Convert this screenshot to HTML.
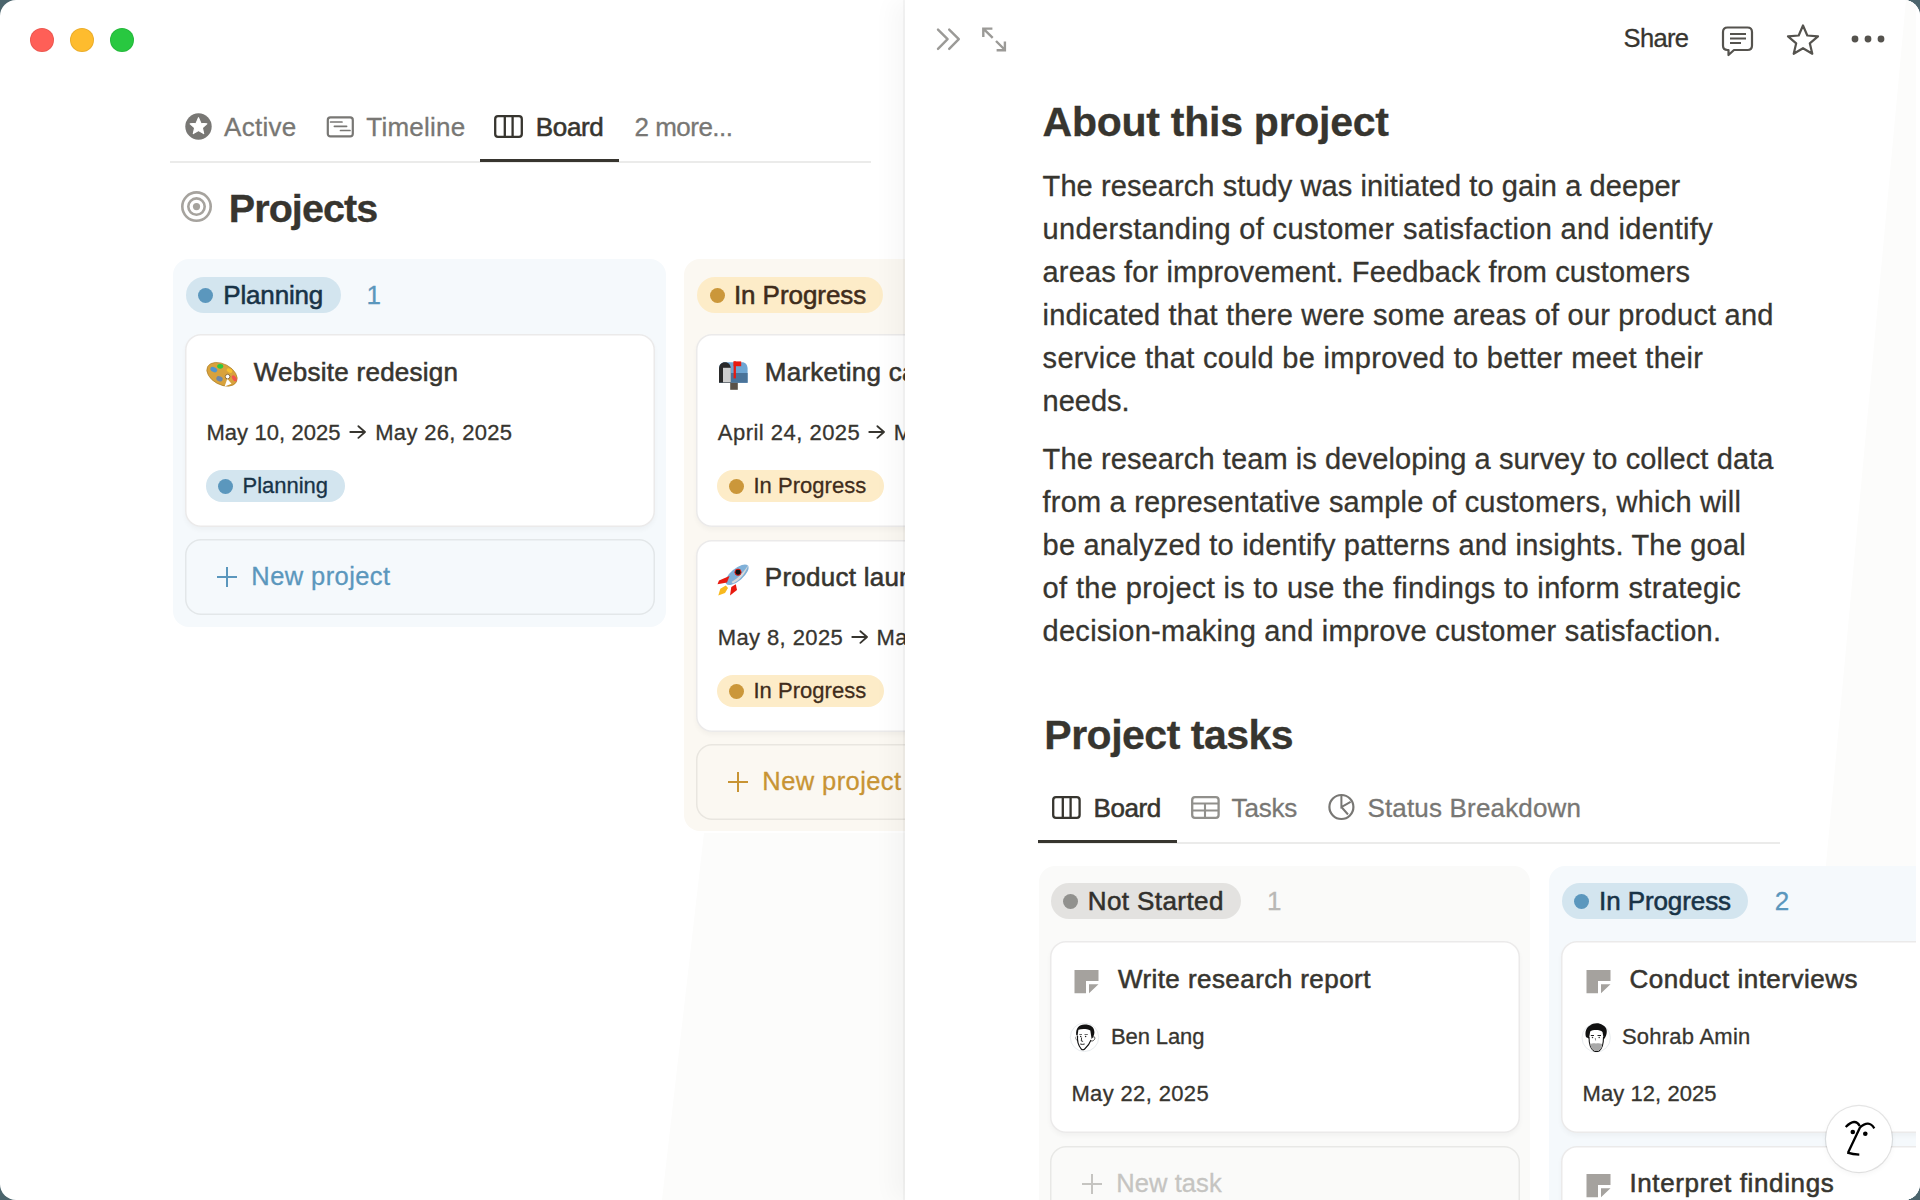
<!DOCTYPE html>
<html><head><meta charset="utf-8">
<style>
*{box-sizing:border-box;margin:0;padding:0}
html,body{width:1920px;height:1200px;overflow:hidden;background:#4b646c}
body{font-family:"Liberation Sans",sans-serif;color:#37352f;position:relative}
.win{position:absolute;left:0;top:0;width:1920px;height:1200px;border-radius:16px;background:#fff;overflow:hidden}
.t{position:absolute;white-space:nowrap;line-height:1em;-webkit-text-stroke-width:0.3px}
.m{-webkit-text-stroke-width:0.55px}
.r{position:absolute}
#left{position:absolute;left:0;top:0;width:905px;height:1200px;overflow:hidden}
#panel{position:absolute;left:905px;top:0;width:1015px;height:1200px;background:#fff;box-shadow:-2px 0 0 rgba(15,15,15,.04),-12px 0 22px rgba(15,15,15,.035)}
#clip{position:absolute;left:-905px;top:0;width:1916px;height:1200px;clip-path:inset(0 0 0 905px)}
</style></head><body>
<div class="win">
<div id="left">
<div class="r" style="left:0px;top:0px;width:905px;height:1200px;background:#fcfcfb;clip-path:polygon(704px 833px, 905px 833px, 905px 1200px, 662px 1200px)"></div>
<div class="r" style="left:30px;top:28px;width:24px;height:24px;border-radius:50%;background:#ff5f57;box-shadow:inset 0 0 0 1px rgba(0,0,0,.08)"></div>
<div class="r" style="left:70px;top:28px;width:24px;height:24px;border-radius:50%;background:#febc2e;box-shadow:inset 0 0 0 1px rgba(0,0,0,.08)"></div>
<div class="r" style="left:110px;top:28px;width:24px;height:24px;border-radius:50%;background:#28c840;box-shadow:inset 0 0 0 1px rgba(0,0,0,.08)"></div>
<svg class="r" style="left:185px;top:113px" width="27" height="27" viewBox="0 0 27 27"><circle cx="13.5" cy="13.5" r="13.2" fill="#787774"/><path d="M13.5 5.6 L15.6 10.6 L20.9 11 L16.9 14.5 L18.1 19.7 L13.5 16.9 L8.9 19.7 L10.1 14.5 L6.1 11 L11.4 10.6 Z" transform="translate(13.5 12.9) scale(1.13) translate(-13.5 -12.9)" fill="#fff" stroke="#fff" stroke-width="1" stroke-linejoin="round"/></svg>
<div class="t" style="left:224.1px;top:114.0px;font-size:26px;color:#787774;letter-spacing:0.283px;">Active</div>
<svg class="r" style="left:326px;top:115px" width="30" height="24" viewBox="0 0 30 24"><rect x="1.8" y="2.3" width="25" height="19.1" rx="2.6" fill="none" stroke="#787774" stroke-width="2.2"/><path d="M4.6 7 H16 M8.4 11.3 H20.6 M14.5 15.5 H24" stroke="#787774" stroke-width="1.7" stroke-linecap="round"/></svg>
<div class="t" style="left:366.3px;top:114.0px;font-size:26px;color:#787774;letter-spacing:0.242px;">Timeline</div>
<svg class="r" style="left:494px;top:115px" width="30" height="24" viewBox="0 0 30 24"><rect x="1.2" y="1.2" width="26.6" height="20.6" rx="2.8" fill="none" stroke="#37352f" stroke-width="2.3"/><path d="M10.8 1.5 V21.5 M18.6 1.5 V21.5" stroke="#37352f" stroke-width="2.3"/></svg>
<div class="t m" style="left:535.8px;top:114.2px;font-size:26px;color:#37352f;letter-spacing:-0.339px;">Board</div>
<div class="t" style="left:634.5px;top:114.0px;font-size:26px;color:#787774;letter-spacing:-0.509px;">2 more...</div>
<div class="r" style="left:170px;top:161px;width:701px;height:2px;background:#ebebea"></div>
<div class="r" style="left:480px;top:159px;width:139px;height:3px;background:#37352f"></div>
<svg class="r" style="left:180px;top:190px" width="34" height="34" viewBox="0 0 34 34"><circle cx="16.5" cy="16.6" r="14.2" fill="none" stroke="#a6a39e" stroke-width="2.6"/><circle cx="16.5" cy="16.6" r="8.2" fill="none" stroke="#a6a39e" stroke-width="2.6"/><circle cx="16.5" cy="16.6" r="3.6" fill="#a6a39e"/></svg>
<div class="t" style="left:228.7px;top:188.6px;font-size:39.5px;color:#37352f;font-weight:700;letter-spacing:-0.889px;">Projects</div>
<div class="r" style="left:173px;top:259px;width:493px;height:368px;border-radius:16px;background:#f5f9fc"></div>
<div class="r" style="left:684px;top:259px;width:400px;height:572px;border-radius:16px;background:#fbf8f2"></div>
<div class="r" style="left:186px;top:277px;width:155px;height:36px;border-radius:18.0px;background:#d3e5ef"></div>
<div class="r" style="left:198.0px;top:287.5px;width:15px;height:15px;border-radius:50%;background:#5b97bd"></div>
<div class="t m" style="left:223.3px;top:282.1px;font-size:26px;color:#183347;letter-spacing:-0.172px;">Planning</div>
<div class="t" style="left:366.4px;top:282.1px;font-size:26px;color:#5b97bd;">1</div>
<div class="r" style="left:185px;top:334px;width:470px;height:193px;background:#fff;border-radius:16px;box-shadow:inset 0 0 0 1.5px rgba(55,53,47,.10),0 3px 5px rgba(15,15,15,.035)"></div>
<svg class="r" style="left:200px;top:352px" width="44" height="44" viewBox="0 0 44 44"><ellipse cx="22" cy="22.3" rx="16.3" ry="10.3" transform="rotate(28 22 22.3)" fill="#d8a23c" stroke="#a97b24" stroke-width=".6"/><path d="M24.6 34.5 L27.3 26.8 L31.5 31.8 Z" fill="#fff"/><circle cx="27.6" cy="24.6" r="2.3" fill="#fff" stroke="#6b4b14" stroke-width=".7"/><ellipse cx="20.2" cy="14.3" rx="3" ry="2.4" fill="#2ec840"/><ellipse cx="13.8" cy="17.6" rx="3.6" ry="2.4" transform="rotate(25 13.8 17.6)" fill="#4e94cf"/><ellipse cx="29.5" cy="18.6" rx="3" ry="2" transform="rotate(30 29.5 18.6)" fill="#f8c22e"/><ellipse cx="34.3" cy="26.3" rx="1.9" ry="3.4" transform="rotate(-35 34.3 26.3)" fill="#f2544c"/><ellipse cx="19.5" cy="26.8" rx="3.3" ry="2.5" transform="rotate(25 19.5 26.8)" fill="#6f87a6"/></svg>
<div class="t m" style="left:253.8px;top:359.0px;font-size:26px;color:#37352f;letter-spacing:0.254px;">Website redesign</div>
<div class="t" style="left:206.4px;top:421.7px;font-size:22px;color:#37352f;letter-spacing:0.08px;">May 10, 2025</div>
<svg class="r" style="left:349.25px;top:425px" width="18" height="14" viewBox="0 0 18 14"><path d="M1.25 7 H15.9 M9.4 1.2 L16 7 L9.4 12.9" fill="none" stroke="#37352f" stroke-width="1.8" stroke-linecap="round" stroke-linejoin="round"/></svg>
<div class="t" style="left:375.2px;top:421.7px;font-size:22px;color:#37352f;letter-spacing:0.325px;">May 26, 2025</div>
<div class="r" style="left:206px;top:470px;width:139px;height:32px;border-radius:16.0px;background:#d3e5ef"></div>
<div class="r" style="left:218.0px;top:478.5px;width:15px;height:15px;border-radius:50%;background:#5b97bd"></div>
<div class="t" style="left:242.5px;top:474.9px;font-size:22px;color:#183347;letter-spacing:-0.019px;">Planning</div>
<div class="r" style="left:185px;top:539px;width:470px;height:76px;border-radius:16px;box-shadow:inset 0 0 0 1.5px rgba(55,53,47,.09)"></div>
<svg class="r" style="left:216px;top:566px" width="22" height="22" viewBox="0 0 22 22"><path d="M11 1 V21 M1 11 H21" stroke="#5b97bd" stroke-width="2"/></svg>
<div class="t" style="left:251.3px;top:564.4px;font-size:25.5px;color:#5b97bd;letter-spacing:0.416px;">New project</div>
<div class="r" style="left:697px;top:277px;width:186px;height:36px;border-radius:18.0px;background:#fdecc8"></div>
<div class="r" style="left:709.5px;top:287.5px;width:15px;height:15px;border-radius:50%;background:#cb973a"></div>
<div class="t m" style="left:733.9px;top:282.0px;font-size:26px;color:#402c1b;letter-spacing:-0.062px;">In Progress</div>
<div class="r" style="left:696px;top:334px;width:470px;height:193px;background:#fff;border-radius:16px;box-shadow:inset 0 0 0 1.5px rgba(55,53,47,.10),0 3px 5px rgba(15,15,15,.035)"></div>
<svg class="r" style="left:712px;top:352px" width="44" height="44" viewBox="0 0 44 44"><path d="M7 30.8 V17 C7 12.5 9.5 10.3 13 10.3 H30 C33.5 10.3 35.6 12.8 35.6 17 V30.8 Z" fill="#6fa6d3"/><rect x="18.6" y="21" width="17" height="9.8" fill="#4a7399"/><path d="M7 30.8 V17 C7 12.5 9.5 10.3 13 10.3 C16.5 10.3 18.8 12.8 18.8 17 V30.8 Z" fill="#2a2a2a"/><rect x="11" y="15.8" width="7.8" height="14.5" fill="#cfcfcf"/><rect x="18.2" y="30.8" width="7.6" height="7" fill="#5a5148"/><rect x="21.6" y="9.4" width="2.3" height="17" fill="#e8190f"/><rect x="21.6" y="9.4" width="7.6" height="4.8" fill="#e8190f"/></svg>
<div class="t m" style="left:764.8px;top:359.0px;font-size:26px;color:#37352f;letter-spacing:0.254px">Marketing campaign</div>
<div class="t" style="left:717.8px;top:421.7px;font-size:22px;color:#37352f;letter-spacing:0.482px;">April 24, 2025</div>
<svg class="r" style="left:867.9px;top:425px" width="18" height="14" viewBox="0 0 18 14"><path d="M1.25 7 H15.9 M9.4 1.2 L16 7 L9.4 12.9" fill="none" stroke="#37352f" stroke-width="1.8" stroke-linecap="round" stroke-linejoin="round"/></svg>
<div class="t" style="left:893.8px;top:421.7px;font-size:22px;color:#37352f;letter-spacing:0.482px">May 24, 2025</div>
<div class="r" style="left:717px;top:470px;width:167px;height:32px;border-radius:16.0px;background:#fdecc8"></div>
<div class="r" style="left:728.5px;top:478.5px;width:15px;height:15px;border-radius:50%;background:#cb973a"></div>
<div class="t" style="left:753.4px;top:474.9px;font-size:22px;color:#402c1b;letter-spacing:0.033px;">In Progress</div>
<div class="r" style="left:696px;top:540px;width:470px;height:192px;background:#fff;border-radius:16px;box-shadow:inset 0 0 0 1.5px rgba(55,53,47,.10),0 3px 5px rgba(15,15,15,.035)"></div>
<svg class="r" style="left:712px;top:557px" width="44" height="44" viewBox="0 0 44 44"><ellipse cx="25" cy="17.7" rx="14.2" ry="6.2" transform="rotate(-40 25 17.7)" fill="#7fb0d8"/><path d="M36.5 8 C33 17 28 23 21 26.5 L19.5 25 C27 21 32 14 36.5 8 Z" fill="#d9d9d9"/><path d="M17.5 19 L7 23.5 L5.5 27.3 L15 25.5 Z" fill="#e8190f"/><path d="M23.8 27.2 L25 33 L18 38.5 L19.3 30 Z" fill="#e8190f"/><path d="M13.8 28.5 L8.3 31.8 L6.3 38.5 L13 36 L16 31 Z" fill="#f8b91f"/><circle cx="26" cy="15.2" r="3.1" fill="#111" stroke="#e8190f" stroke-width="1"/></svg>
<div class="t m" style="left:764.8px;top:564.0px;font-size:26px;color:#37352f;letter-spacing:0.254px">Product launch</div>
<div class="t" style="left:717.7px;top:626.7px;font-size:22px;color:#37352f;letter-spacing:0.404px;">May 8, 2025</div>
<svg class="r" style="left:850.5px;top:630px" width="18" height="14" viewBox="0 0 18 14"><path d="M1.25 7 H15.9 M9.4 1.2 L16 7 L9.4 12.9" fill="none" stroke="#37352f" stroke-width="1.8" stroke-linecap="round" stroke-linejoin="round"/></svg>
<div class="t" style="left:876.5px;top:626.7px;font-size:22px;color:#37352f;letter-spacing:0.404px">May 30, 2025</div>
<div class="r" style="left:717px;top:675px;width:167px;height:32px;border-radius:16.0px;background:#fdecc8"></div>
<div class="r" style="left:728.5px;top:683.5px;width:15px;height:15px;border-radius:50%;background:#cb973a"></div>
<div class="t" style="left:753.4px;top:679.9px;font-size:22px;color:#402c1b;letter-spacing:0.033px;">In Progress</div>
<div class="r" style="left:696px;top:744px;width:470px;height:76px;border-radius:16px;box-shadow:inset 0 0 0 1.5px rgba(55,53,47,.09)"></div>
<svg class="r" style="left:727px;top:771px" width="22" height="22" viewBox="0 0 22 22"><path d="M11 1 V21 M1 11 H21" stroke="#c89434" stroke-width="2"/></svg>
<div class="t" style="left:762.3px;top:769.4px;font-size:25.5px;color:#c89434;letter-spacing:0.416px;">New project</div>
</div>
<div id="panel"><div id="clip">
<div class="r" style="left:905px;top:0px;width:1015px;height:1200px;background:#fcfcfb;clip-path:polygon(1001px 0, 1015px 0, 1015px 1200px, 890px 1200px)"></div>
<svg class="r" style="left:930px;top:22px" width="40" height="34" viewBox="0 0 40 34"><path d="M8 7.6 L17.6 17.2 L8 26.9 M19.2 7.6 L28.8 17.2 L19.2 26.9" fill="none" stroke="#9b9a97" stroke-width="2.4" stroke-linecap="round" stroke-linejoin="round"/></svg>
<svg class="r" style="left:975px;top:22px" width="40" height="34" viewBox="0 0 40 34"><path d="M8.3 15.1 V6.6 H17.4 M8.6 6.9 L17.7 15.9 M21 19 L30 28 M21.6 28.2 H29.9 V19.6" fill="none" stroke="#9b9a97" stroke-width="2.4" stroke-linecap="butt" stroke-linejoin="miter"/></svg>
<div class="t" style="left:1623.6px;top:25.9px;font-size:25.5px;color:#37352f;letter-spacing:-0.68px;">Share</div>
<svg class="r" style="left:1720px;top:24px" width="36" height="34" viewBox="0 0 36 34"><path d="M7.5 3.5 H27.5 Q32 3.5 32 8 V21.5 Q32 26 27.5 26 H14 L8.5 31 V26 H7.5 Q3 26 3 21.5 V8 Q3 3.5 7.5 3.5 Z" fill="none" stroke="#55534e" stroke-width="2.2" stroke-linejoin="round"/><path d="M10 10 H26 M10 14.5 H26 M10 19 H21" stroke="#55534e" stroke-width="1.8"/></svg>
<svg class="r" style="left:1785px;top:22px" width="36" height="36" viewBox="0 0 36 36"><path d="M18 3.5 L22.3 13.5 L33 14.3 L24.8 21.3 L27.3 31.8 L18 26.2 L8.7 31.8 L11.2 21.3 L3 14.3 L13.7 13.5 Z" fill="none" stroke="#55534e" stroke-width="2.2" stroke-linejoin="round"/></svg>
<svg class="r" style="left:1848px;top:32px" width="40" height="14" viewBox="0 0 40 14"><circle cx="7" cy="7" r="3.4" fill="#55534e"/><circle cx="20" cy="7" r="3.4" fill="#55534e"/><circle cx="33" cy="7" r="3.4" fill="#55534e"/></svg>
<div class="t" style="left:1042.6px;top:101.7px;font-size:41px;color:#37352f;font-weight:700;letter-spacing:-0.256px;">About this project</div>
<div class="t" style="left:1042.6px;top:171.5px;font-size:29px;color:#37352f;letter-spacing:0.086px;">The research study was initiated to gain a deeper</div>
<div class="t" style="left:1042.6px;top:214.5px;font-size:29px;color:#37352f;letter-spacing:0.345px;">understanding of customer satisfaction and identify</div>
<div class="t" style="left:1042.6px;top:257.5px;font-size:29px;color:#37352f;letter-spacing:0.132px;">areas for improvement. Feedback from customers</div>
<div class="t" style="left:1042.6px;top:300.5px;font-size:29px;color:#37352f;letter-spacing:0.188px;">indicated that there were some areas of our product and</div>
<div class="t" style="left:1042.6px;top:343.5px;font-size:29px;color:#37352f;letter-spacing:0.312px;">service that could be improved to better meet their</div>
<div class="t" style="left:1042.6px;top:386.5px;font-size:29px;color:#37352f;">needs.</div>
<div class="t" style="left:1042.6px;top:444.5px;font-size:29px;color:#37352f;letter-spacing:0.099px;">The research team is developing a survey to collect data</div>
<div class="t" style="left:1042.6px;top:487.5px;font-size:29px;color:#37352f;letter-spacing:0.193px;">from a representative sample of customers, which will</div>
<div class="t" style="left:1042.6px;top:530.5px;font-size:29px;color:#37352f;letter-spacing:0.192px;">be analyzed to identify patterns and insights. The goal</div>
<div class="t" style="left:1042.6px;top:573.5px;font-size:29px;color:#37352f;letter-spacing:0.35px;">of the project is to use the findings to inform strategic</div>
<div class="t" style="left:1042.6px;top:616.5px;font-size:29px;color:#37352f;letter-spacing:0.261px;">decision-making and improve customer satisfaction.</div>
<div class="t" style="left:1044.3px;top:715.4px;font-size:41px;color:#37352f;font-weight:700;letter-spacing:-0.494px;">Project tasks</div>
<svg class="r" style="left:1051px;top:795px" width="31" height="25" viewBox="0 0 31 25"><rect x="2.2" y="2.2" width="26.4" height="20.6" rx="2.8" fill="none" stroke="#37352f" stroke-width="2.3"/><path d="M11.8 2.5 V22.5 M19.6 2.5 V22.5" stroke="#37352f" stroke-width="2.3"/></svg>
<div class="t m" style="left:1093.6px;top:795.2px;font-size:26px;color:#37352f;letter-spacing:-0.414px;">Board</div>
<svg class="r" style="left:1190px;top:795px" width="31" height="25" viewBox="0 0 31 25"><rect x="2.2" y="2.2" width="26.4" height="20.6" rx="2.8" fill="none" stroke="#91908c" stroke-width="2.3"/><path d="M2.5 8.5 H28.5 M2.5 15.5 H28.5 M15 8.5 V22.5" stroke="#91908c" stroke-width="2.1"/></svg>
<div class="t" style="left:1231.6px;top:795.0px;font-size:26px;color:#787774;letter-spacing:-0.207px;">Tasks</div>
<svg class="r" style="left:1327px;top:793px" width="29" height="29" viewBox="0 0 29 29"><circle cx="14.4" cy="14" r="12" fill="none" stroke="#787774" stroke-width="2.2"/><path d="M14.4 2 V14 L23.6 8.8 M14.4 14 L21 21.5" fill="none" stroke="#787774" stroke-width="2"/></svg>
<div class="t" style="left:1367.4px;top:794.8px;font-size:26px;color:#787774;letter-spacing:0.174px;">Status Breakdown</div>
<div class="r" style="left:1038px;top:842px;width:742px;height:2px;background:#ebebea"></div>
<div class="r" style="left:1038px;top:840px;width:139px;height:3px;background:#37352f"></div>
<div class="r" style="left:1039px;top:866px;width:491px;height:400px;border-radius:16px;background:#fafaf9"></div>
<div class="r" style="left:1549px;top:866px;width:500px;height:400px;border-radius:16px;background:#f5f9fc"></div>
<div class="r" style="left:1051px;top:883px;width:190px;height:36px;border-radius:18.0px;background:#e3e2e0"></div>
<div class="r" style="left:1063.0px;top:893.5px;width:15px;height:15px;border-radius:50%;background:#91918e"></div>
<div class="t m" style="left:1087.7px;top:888.0px;font-size:26px;color:#32302c;letter-spacing:0.421px;">Not Started</div>
<div class="t" style="left:1267.0px;top:888.0px;font-size:26px;color:#b9b8b5;">1</div>
<div class="r" style="left:1050px;top:941px;width:470px;height:192px;background:#fff;border-radius:16px;box-shadow:inset 0 0 0 1.5px rgba(55,53,47,.10),0 3px 5px rgba(15,15,15,.035)"></div>
<svg class="r" style="left:1074px;top:970px" width="25" height="25" viewBox="0 0 25 25"><path d="M0.5 -0.25 H24.5 V11 H12 V23.25 H0.5 Z M15 14.15 H24.5 L15 23.25 Z" fill="#a5a29e"/></svg>
<div class="t m" style="left:1117.9px;top:966.3px;font-size:26px;color:#37352f;letter-spacing:0.438px;">Write research report</div>
<svg class="r" style="left:1066px;top:1020px" width="36" height="36" viewBox="0 0 36 36"><circle cx="18.5" cy="17.3" r="14.2" fill="#fff" stroke="#e8ecef" stroke-width="1"/><path d="M11.6 16 C11 21 12 25 15.2 29 C16.3 30 17.5 30 18.7 29 C21 27 23.5 24 25 20" fill="none" stroke="#111" stroke-width="1.1"/><path d="M10.2 15 C9.6 8 13 4.4 18.5 4.4 C24.5 4.4 28.6 7 28.4 12.5 C28.3 15.5 27 17.5 25.6 19 L24.3 10.4 C20.5 8.6 15.5 8.7 12.4 9.8 C12 12 11.8 14 11.6 16 Z" fill="#111"/><path d="M26 17.5 C27.5 16.3 29.3 16.6 28.8 18.6 C28.3 20.3 27 21.2 25.2 21" fill="none" stroke="#333" stroke-width=".9"/><path d="M10.2 16.5 C9.3 17.5 9.6 19.5 11 20.3" fill="none" stroke="#777" stroke-width=".9"/><path d="M13.3 14.5 H16 M18.5 14.5 H21.8" stroke="#444" stroke-width=".8"/><circle cx="14.7" cy="16.6" r=".75" fill="#222"/><circle cx="19.6" cy="16.6" r=".75" fill="#222"/><path d="M15.6 17.5 L15.3 21 L17.1 21.4" fill="none" stroke="#222" stroke-width=".9"/><path d="M14.2 24 Q16.5 24.8 18.7 24" fill="none" stroke="#222" stroke-width="1"/></svg>
<div class="t" style="left:1111.0px;top:1025.8px;font-size:22px;color:#37352f;letter-spacing:-0.102px;">Ben Lang</div>
<div class="t" style="left:1071.4px;top:1082.6px;font-size:22px;color:#37352f;letter-spacing:0.362px;">May 22, 2025</div>
<div class="r" style="left:1050px;top:1146px;width:470px;height:80px;border-radius:16px;box-shadow:inset 0 0 0 1.5px rgba(55,53,47,.09)"></div>
<svg class="r" style="left:1081px;top:1173px" width="22" height="22" viewBox="0 0 22 22"><path d="M11 1 V21 M1 11 H21" stroke="#c5c4c1" stroke-width="2"/></svg>
<div class="t" style="left:1116.2px;top:1171.3px;font-size:25.5px;color:#c5c4c1;letter-spacing:0.095px;">New task</div>
<div class="r" style="left:1562px;top:883px;width:186px;height:36px;border-radius:18.0px;background:#d3e5ef"></div>
<div class="r" style="left:1574.0px;top:893.5px;width:15px;height:15px;border-radius:50%;background:#5b97bd"></div>
<div class="t m" style="left:1599.0px;top:887.6px;font-size:26px;color:#183347;letter-spacing:-0.083px;">In Progress</div>
<div class="t" style="left:1774.7px;top:887.6px;font-size:26px;color:#5b97bd;">2</div>
<div class="r" style="left:1561px;top:941px;width:470px;height:192px;background:#fff;border-radius:16px;box-shadow:inset 0 0 0 1.5px rgba(55,53,47,.10),0 3px 5px rgba(15,15,15,.035)"></div>
<svg class="r" style="left:1586px;top:970px" width="25" height="25" viewBox="0 0 25 25"><path d="M0.5 -0.25 H24.5 V11 H12 V23.25 H0.5 Z M15 14.15 H24.5 L15 23.25 Z" fill="#a5a29e"/></svg>
<div class="t m" style="left:1629.5px;top:966.3px;font-size:26px;color:#37352f;letter-spacing:0.486px;">Conduct interviews</div>
<svg class="r" style="left:1578px;top:1020px" width="36" height="36" viewBox="0 0 36 36"><circle cx="18.2" cy="17.8" r="14.2" fill="#fff" stroke="#e8ecef" stroke-width="1"/><path d="M11 17 C11 24 12.5 29 16 31 C17.5 31.6 19.5 31.6 21 31 C24 29 25.5 24 25.5 17" fill="none" stroke="#111" stroke-width="1.1"/><path d="M12.5 24 C14 23 16 23 18 23.5 C20 23 22 23 24 24 C24.5 27 23 30.5 18.5 31 C14 30.5 12.5 27.5 12.5 24 Z" fill="#a8a8a8"/><path d="M8 17 C6.5 12 8.5 7 12 5.5 C15 3 21 2.5 24.5 5 C28 6.5 29.5 10 28.5 14 C28 16 27 18 25.8 19.5 L24.5 12 C22 9.5 15 9.5 12.2 11.5 L11 18.5 C10 18 8.8 17.8 8 17 Z" fill="#111"/><path d="M12.8 15.5 H16 M19.5 15.5 H23" stroke="#222" stroke-width="1"/><circle cx="14.5" cy="17.5" r=".75" fill="#333"/><circle cx="21.2" cy="17.5" r=".75" fill="#333"/><path d="M17.3 18 L17.6 20.5" stroke="#777" stroke-width=".8"/></svg>
<div class="t" style="left:1621.9px;top:1025.6px;font-size:22px;color:#37352f;letter-spacing:0.245px;">Sohrab Amin</div>
<div class="t" style="left:1582.5px;top:1082.7px;font-size:22px;color:#37352f;letter-spacing:0.071px;">May 12, 2025</div>
<div class="r" style="left:1561px;top:1146px;width:470px;height:192px;background:#fff;border-radius:16px;box-shadow:inset 0 0 0 1.5px rgba(55,53,47,.10),0 3px 5px rgba(15,15,15,.035)"></div>
<svg class="r" style="left:1586px;top:1174px" width="25" height="25" viewBox="0 0 25 25"><path d="M0.5 -0.25 H24.5 V11 H12 V23.25 H0.5 Z M15 14.15 H24.5 L15 23.25 Z" fill="#a5a29e"/></svg>
<div class="t m" style="left:1629.4px;top:1170.2px;font-size:26px;color:#37352f;letter-spacing:0.629px;">Interpret findings</div>
</div></div>
<div class="r" style="left:1826px;top:1106px;width:66px;height:66px;border-radius:50%;background:#fff;box-shadow:0 0 0 1.2px rgba(15,15,15,.10),0 2px 6px rgba(15,15,15,.05)"></div>
<svg class="r" style="left:1826px;top:1105px" width="66" height="66" viewBox="0 0 66 66"><path d="M19.7 22 Q29.3 12.5 33.7 21 M22 47.7 L34 22.5 Q42.85 14.5 48.3 23.3 M21.3 47.7 Q27 49.5 33.3 49.7" fill="none" stroke="#000" stroke-width="2.3" stroke-linecap="butt"/><circle cx="26.8" cy="27" r="2.3" fill="#000"/><circle cx="39.3" cy="28.7" r="2.3" fill="#000"/></svg>
</div>
</body></html>
